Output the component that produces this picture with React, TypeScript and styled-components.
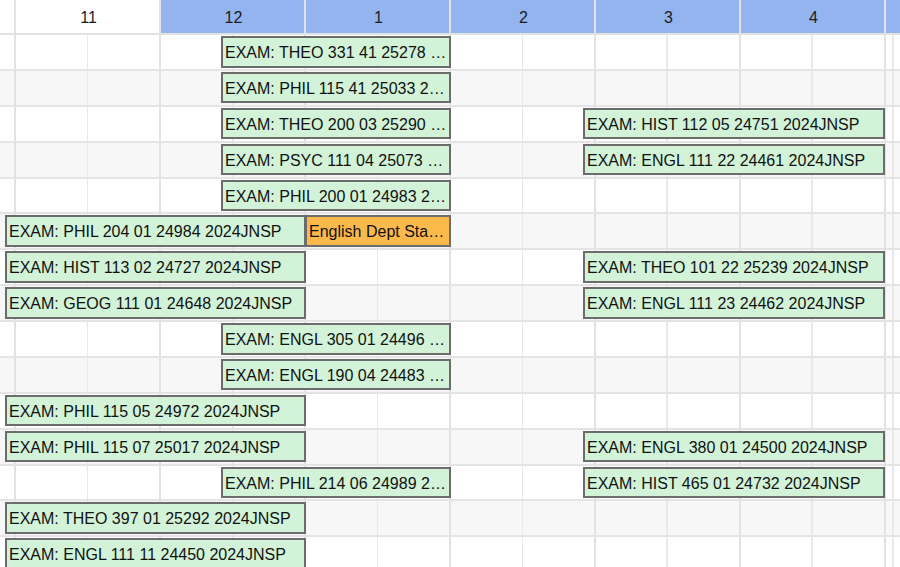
import React from "react";
import styled, { createGlobalStyle } from "styled-components";

const HOUR = 145;
const hours = ["11", "12", "1", "2", "3", "4"];

type Ev = { row: number; from: number; to: number; text: string; kind?: "exam" | "meeting" };

const L = 5;
const M = 221;
const R = 583;

const events: Ev[] = [
  { row: 0, from: M, to: 451, text: "EXAM: THEO 331 41 25278 2024JNSP" },
  { row: 1, from: M, to: 451, text: "EXAM: PHIL 115 41 25033 2024JNSP" },
  { row: 2, from: M, to: 451, text: "EXAM: THEO 200 03 25290 2024JNSP" },
  { row: 2, from: R, to: 885, text: "EXAM: HIST 112 05 24751 2024JNSP" },
  { row: 3, from: M, to: 451, text: "EXAM: PSYC 111 04 25073 2024JNSP" },
  { row: 3, from: R, to: 885, text: "EXAM: ENGL 111 22 24461 2024JNSP" },
  { row: 4, from: M, to: 451, text: "EXAM: PHIL 200 01 24983 2024JNSP" },
  { row: 5, from: L, to: 306, text: "EXAM: PHIL 204 01 24984 2024JNSP" },
  { row: 5, from: 305, to: 451, text: "English Dept Staff Meeting", kind: "meeting" },
  { row: 6, from: L, to: 306, text: "EXAM: HIST 113 02 24727 2024JNSP" },
  { row: 6, from: R, to: 885, text: "EXAM: THEO 101 22 25239 2024JNSP" },
  { row: 7, from: L, to: 306, text: "EXAM: GEOG 111 01 24648 2024JNSP" },
  { row: 7, from: R, to: 885, text: "EXAM: ENGL 111 23 24462 2024JNSP" },
  { row: 8, from: M, to: 451, text: "EXAM: ENGL 305 01 24496 2024JNSP" },
  { row: 9, from: M, to: 451, text: "EXAM: ENGL 190 04 24483 2024JNSP" },
  { row: 10, from: L, to: 306, text: "EXAM: PHIL 115 05 24972 2024JNSP" },
  { row: 11, from: L, to: 306, text: "EXAM: PHIL 115 07 25017 2024JNSP" },
  { row: 11, from: R, to: 885, text: "EXAM: ENGL 380 01 24500 2024JNSP" },
  { row: 12, from: M, to: 451, text: "EXAM: PHIL 214 06 24989 2024JNSP" },
  { row: 12, from: R, to: 885, text: "EXAM: HIST 465 01 24732 2024JNSP" },
  { row: 13, from: L, to: 306, text: "EXAM: THEO 397 01 25292 2024JNSP" },
  { row: 14, from: L, to: 306, text: "EXAM: ENGL 111 11 24450 2024JNSP" },
];

const ROWS = 15;

const App = () => {
  return (
    <>
      <GlobalStyle />
      <Calendar>
        <HeaderRow>
          <HeaderCell />
          {hours.map((h, i) => (
            <HeaderCell key={h} $active={i > 0}>
              {h}
            </HeaderCell>
          ))}
          <HeaderCell $active />
        </HeaderRow>
        {Array.from({ length: ROWS }).map((_, r) => (
          <Row key={r} $alt={r % 2 === 1}>
            <EdgeCell />
            {hours.map((h) => (
              <HourCell key={h} />
            ))}
            <HourCell />
            {events
              .filter((e) => e.row === r)
              .map((e) => (
                <Event
                  key={e.text}
                  $kind={e.kind || "exam"}
                  style={{ left: e.from, width: e.to - e.from }}
                >
                  {e.text}
                </Event>
              ))}
          </Row>
        ))}
      </Calendar>
    </>
  );
};

export default App;

const GlobalStyle = createGlobalStyle`
  html, body {
    margin: 0;
    padding: 0;
    background: #fff;
    overflow: hidden;
    font-family: "Liberation Sans", Arial, Helvetica, sans-serif;
  }
`;

const Calendar = styled.div`
  width: 900px;
  height: 567px;
  overflow: hidden;
`;

const columns = `14px repeat(6, ${HOUR}px) 1fr`;

const HeaderRow = styled.div`
  display: grid;
  grid-template-columns: ${columns};
  height: 35px;
  box-sizing: border-box;
  border-bottom: 2px solid #e2e2e2;
`;

const HeaderCell = styled.div<{ $active?: boolean }>`
  display: flex;
  align-items: center;
  justify-content: center;
  background: ${(p) => (p.$active ? "#93b4ee" : "#fff")};
  font-size: 16px;
  color: #1c1c1c;
  padding: 3px 0 0 2px;
  box-sizing: border-box;

  & + & {
    border-left: 2px solid #e2e2e2;
  }
`;

const Row = styled.div<{ $alt: boolean }>`
  position: relative;
  display: grid;
  grid-template-columns: ${columns};
  height: 35.88px;
  box-sizing: border-box;
  border-bottom: 2px solid #e4e4e4;
  background: ${(p) => (p.$alt ? "#f7f7f7" : "#fff")};
`;

const EdgeCell = styled.div``;

const HourCell = styled.div`
  border-left: 2px solid #e2e2e2;
  background: linear-gradient(
    to right,
    transparent calc(50% - 1px),
    #e9e9e9 calc(50% - 1px),
    #e9e9e9 calc(50% + 1px),
    transparent calc(50% + 1px)
  );
`;

const Event = styled.div<{ $kind: "exam" | "meeting" }>`
  position: absolute;
  top: 1px;
  height: 31.5px;
  box-sizing: border-box;
  border: 2px solid #6c6c6c;
  background: ${(p) => (p.$kind === "meeting" ? "#fbb84b" : "#d2f3d8")};
  color: #111;
  font-size: 16px;
  line-height: 29px;
  padding: 0 1px 0 2px;
  white-space: nowrap;
  overflow: hidden;
  text-overflow: ellipsis;
`;
